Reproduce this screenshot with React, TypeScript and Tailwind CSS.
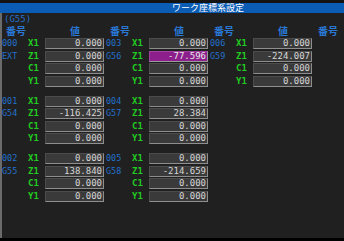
import React from 'react';

type Group = { num: string; name: string; values: string[]; hot?: number };

const AXES = ['X1', 'Z1', 'C1', 'Y1'];

const COLUMNS: Group[][] = [
  [
    { num: '000', name: 'EXT', values: ['0.000', '0.000', '0.000', '0.000'] },
    { num: '001', name: 'G54', values: ['0.000', '-116.425', '0.000', '0.000'] },
    { num: '002', name: 'G55', values: ['0.000', '138.840', '0.000', '0.000'] },
  ],
  [
    { num: '003', name: 'G56', values: ['0.000', '-77.596', '0.000', '0.000'], hot: 1 },
    { num: '004', name: 'G57', values: ['0.000', '28.384', '0.000', '0.000'] },
    { num: '005', name: 'G58', values: ['0.000', '-214.659', '0.000', '0.000'] },
  ],
  [{ num: '006', name: 'G59', values: ['0.000', '-224.007', '0.000', '0.000'] }],
];

const mono = { fontFamily: '"DejaVu Sans Mono", "Liberation Mono", monospace' };
const cjk = { fontFamily: '"Noto Sans CJK JP", "Noto Sans", sans-serif' };

function Row({ label, axis, value, hot }: { label: string; axis: string; value: string; hot?: boolean }) {
  return (
    <div className="flex h-[11px] items-center">
      <div className="w-[26px] pl-[2px] text-[8.5px] leading-[11px] text-[#2470cc]" style={mono}>
        {label}
      </div>
      <div className="w-[19px] pl-[2px] text-[9px] font-bold leading-[11px] text-[#22cc22]" style={mono}>
        {axis}
      </div>
      <div
        className={`flex h-[11px] w-[59px] items-center justify-end border-t border-l border-r border-b pr-[1px] text-[9px] leading-[9px] ${
          hot
            ? 'bg-[#8c1f8c] border-t-[#a040a0] border-l-[#a040a0] border-r-[#9a9a9a] border-b-[#9a9a9a] text-[#e8e8e8]'
            : 'bg-[#3a3a3a] border-t-[#4c4c4c] border-l-[#4c4c4c] border-r-[#8e8e8e] border-b-[#8e8e8e] text-[#d6d6d6]'
        }`}
        style={mono}
      >
        {value}
      </div>
    </div>
  );
}

export default function App() {
  return (
    <div className="flex h-[241px] w-[344px] flex-col overflow-hidden bg-[#202020]">
      <div className="h-[3px] bg-[#141414]" />
      <div className="h-[10px] bg-[#0b5cb4] pl-[172px] text-[9px] leading-[10px] text-white" style={cjk}>
        ワーク座標系設定
      </div>
      <div className="flex flex-1 flex-col border-l-2 border-[#6b6b6b]">
        <div className="h-[11px] pt-[2px] pl-[2px] text-[9px] leading-[9px] text-[#2470cc]" style={mono}>
          (G55)
        </div>
        <div className="-ml-[2px] flex h-[14px] pt-[2px] text-[10px] font-bold leading-[10px] text-[#2a78d6]" style={cjk}>
          {[0, 1, 2].map((i) => (
            <div key={i} className="flex w-[104px]">
              <div className="w-[70px] pl-[6px]">番号</div>
              <div>値</div>
            </div>
          ))}
          <div className="pl-[6px]">番号</div>
        </div>
        <div className="-ml-[2px] flex">
          {COLUMNS.map((groups, ci) => (
            <div key={ci} className="flex w-[104px] flex-col gap-[9px]">
              {groups.map((g) => (
                <div key={g.num} className="flex flex-col gap-[1.5px]">
                  {AXES.map((ax, ri) => (
                    <Row
                      key={ax}
                      label={ri === 0 ? g.num : ri === 1 ? g.name : ''}
                      axis={ax}
                      value={g.values[ri]}
                      hot={g.hot === ri}
                    />
                  ))}
                </div>
              ))}
            </div>
          ))}
        </div>
      </div>
      <div className="h-[3px] bg-black" />
    </div>
  );
}
